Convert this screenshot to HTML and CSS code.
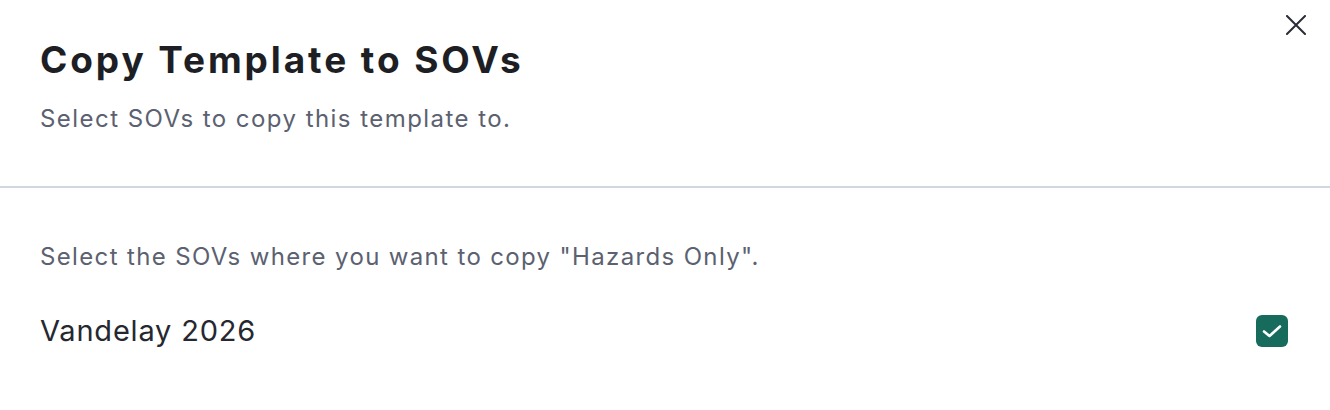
FILE: index.html
```html
<!DOCTYPE html>
<html lang="en">
<head>
<meta charset="utf-8">
<title>Copy Template to SOVs</title>
<link rel="stylesheet" href="styles.css">
</head>
<body>
<div class="modal">
  <header class="modal-header">
    <h1 class="modal-title">Copy Template to SOVs</h1>
    <p class="modal-subtitle">Select SOVs to copy this template to.</p>
    <button class="close-btn" aria-label="Close">
      <svg width="20" height="20" viewBox="0 0 20 20" fill="none" stroke="currentColor" stroke-width="2" stroke-linecap="square">
        <path d="M1 1L19 19M19 1L1 19"/>
      </svg>
    </button>
  </header>
  <section class="modal-body">
    <p class="instructions">Select the SOVs where you want to copy "Hazards Only".</p>
    <label class="sov-row">
      <span class="sov-name">Vandelay 2026</span>
      <span class="checkbox checked">
        <svg width="22" height="22" viewBox="0 0 22 22" fill="none" stroke="#fff" stroke-width="2.6" stroke-linecap="round" stroke-linejoin="round">
          <path d="M3 11.5L8.5 16L19 6.5"/>
        </svg>
      </span>
    </label>
  </section>
</div>
</body>
</html>
```
FILE: styles.css
```css
* { box-sizing: border-box; }
html, body { margin: 0; padding: 0; background: #fff; }
body {
  font-family: Inter, "Noto Sans", "Liberation Sans", sans-serif;
  color: #22242b;
}
.modal { width: 1330px; }
.modal-header {
  position: relative;
  padding: 38px 40px 51px 40px;
  border-bottom: 2px solid #d2d8e2;
}
.modal-title {
  margin: 0;
  font-size: 37px;
  line-height: 44px;
  font-weight: 700;
  color: #1e1f25;
  letter-spacing: 2.9px;
}
.modal-subtitle {
  margin: 21px 0 0 0;
  font-size: 24px;
  line-height: 32px;
  color: #5b6170;
  letter-spacing: 1.45px;
}
.close-btn {
  position: absolute;
  top: 15px;
  right: 24px;
  width: 20px;
  height: 20px;
  padding: 0;
  border: 0;
  background: none;
  color: #2b2d35;
  cursor: pointer;
}
.close-btn svg { display: block; }
.modal-body {
  padding: 53px 42px 0 40px;
}
.instructions {
  margin: 0;
  font-size: 24px;
  line-height: 32px;
  color: #5b6170;
  letter-spacing: 1.35px;
}
.sov-row {
  margin-top: 38px;
  display: flex;
  align-items: center;
  justify-content: space-between;
  height: 40px;
}
.sov-name {
  font-size: 29px;
  line-height: 40px;
  color: #262830;
  letter-spacing: 0.8px;
}
.checkbox {
  width: 32px;
  height: 32px;
  border-radius: 6px;
  display: flex;
  align-items: center;
  justify-content: center;
}
.checkbox.checked { background: #176b5d; }
```
